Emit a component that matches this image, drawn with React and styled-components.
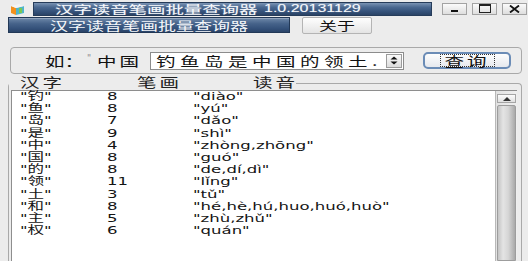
import styled, { createGlobalStyle } from 'styled-components';

const GlobalStyle = createGlobalStyle`
  html, body { margin: 0; padding: 0; background: #ececec; }
  body { font-family: "Noto Sans CJK SC", "DejaVu Sans", sans-serif; }
`;

// text in the shot is drawn wide, so glyphs get stretched horizontally
const Wide = styled.span`
  display: inline-block;
  white-space: nowrap;
  transform: scaleX(${p => p.$sx ?? 1.5});
  transform-origin: ${p => p.$origin ?? 'left'} center;
  letter-spacing: ${p => p.$ls ?? 0}px;
`;

const Window = styled.div`
  width: 528px;
  height: 261px;
  overflow: hidden;
  background: #ececec;
  display: flex;
  flex-direction: column;
`;

// Title bar

const TitleBar = styled.div`
  height: 15px;
  padding-top: 1px;
  display: flex;
  align-items: center;
`;

const AppIcon = styled.svg`
  margin-left: 10px;
  flex: none;
`;

const Caption = styled.div`
  margin-left: 8px;
  width: 399px;
  height: 14px;
  box-sizing: border-box;
  border: 1px solid #263c5a;
  background: linear-gradient(#7a93b3 0%, #4a6890 35%, #35527a 70%, #2a4366 100%);
  color: #f6f8fb;
  font-size: 11.5px;
  line-height: 12px;
  padding-left: 21px;
  overflow: hidden;
  display: flex;
  text-shadow: 0 0 1px rgba(255, 255, 255, 0.4);
`;

const CaptionName = styled.div`
  flex: none;
  width: 209px;
`;

const Version = styled(Wide)`
  font-family: "Liberation Sans", sans-serif;
  font-size: 10px;
`;

const WinButtons = styled.div`
  margin-left: 10px;
  display: flex;
  gap: 5px;
`;

const WinButton = styled.div`
  width: 25px;
  height: 12px;
  box-sizing: border-box;
  border: 1px solid #a3a3a3;
  background: linear-gradient(#fbfbfb, #dedede);
  display: flex;
  align-items: center;
  justify-content: center;
`;

// Banner row

const BannerRow = styled.div`
  margin-top: 1px;
  height: 17px;
  display: flex;
  padding-left: 8px;
`;

const Banner = styled.div`
  width: 282px;
  height: 16px;
  box-sizing: border-box;
  border: 1px solid #223856;
  box-shadow: inset 0 1px 0 rgba(255, 255, 255, 0.25);
  background: linear-gradient(#6f89aa 0%, #46638a 40%, #34517a 75%, #2b4468 100%);
  color: #f6f8fb;
  font-size: 12px;
  display: flex;
  align-items: center;
  justify-content: center;
`;

const PlainButton = styled.div`
  margin-left: 12px;
  width: 70px;
  height: 17px;
  box-sizing: border-box;
  border: 1px solid #b4b4b4;
  border-radius: 2px;
  background: linear-gradient(#fefefe, #e4e4e4);
  color: #111;
  font-size: 12px;
  display: flex;
  align-items: center;
  justify-content: center;
`;

// Query panel

const QueryPanel = styled.div`
  margin: 13px 6px 0 10px;
  height: 27px;
  box-sizing: border-box;
  border: 1px solid #a9a9a9;
  border-radius: 4px;
  display: flex;
  align-items: center;
  font-size: 13px;
  color: #111;
`;

const Lead = styled.div`
  margin-left: 34px;
  width: 40px;
  height: 18px;
  line-height: 18px;
`;

const Sample = styled.div`
  width: 65px;
  height: 18px;
  line-height: 18px;
  display: flex;
`;

const Quote = styled.span`
  width: 12px;
  padding-left: 2px;
  box-sizing: border-box;
  font-family: "DejaVu Sans", sans-serif;
  font-size: 9px;
  line-height: 12px;
  color: #8a8a8a;
`;

const Combo = styled.div`
  width: 254px;
  height: 18px;
  box-sizing: border-box;
  border: 1px solid #8c8c8c;
  background: #fff;
  display: flex;
  align-items: center;
`;

const ComboText = styled.div`
  flex: 1;
  padding-left: 5px;
  overflow: hidden;
  line-height: 16px;
`;

const Spin = styled.div`
  width: 16px;
  height: 14px;
  margin-right: 1px;
  box-sizing: border-box;
  border: 1px solid #9b9b9b;
  background: linear-gradient(#fafafa, #dcdcdc);
  display: flex;
  align-items: center;
  justify-content: center;
`;

const SearchButton = styled.div`
  margin-left: 19px;
  width: 88px;
  height: 17px;
  box-sizing: border-box;
  border: 2px solid #6b8cb6;
  border-radius: 5px;
  background: linear-gradient(#fdfdfd, #e6e9ee);
  display: flex;
  align-items: center;
  justify-content: center;
`;

const FocusRing = styled.div`
  width: 55px;
  height: 13px;
  box-sizing: border-box;
  border: 1px dotted #333;
  display: flex;
  align-items: center;
  justify-content: center;
  line-height: 11px;
`;

// Result group

const Group = styled.div`
  margin: 9px 6px 0 8px;
  flex: 1;
  min-height: 0;
  border: 1px solid #a9a9a9;
  border-bottom: none;
  border-radius: 4px 4px 0 0;
  display: flex;
  flex-direction: column;
`;

const Legend = styled.div`
  margin-top: -8px;
  margin-bottom: 1px;
  width: 287px;
  height: 13px;
  background: #ececec;
  display: grid;
  grid-template-columns: 117px 116px 1fr;
  padding-left: 11px;
  box-sizing: border-box;
  font-size: 13px;
  line-height: 12px;
  color: #222;
`;

const ListFrame = styled.div`
  margin: 0 4px 0 2px;
  flex: 1;
  min-height: 0;
  display: flex;
  border-top: 1px solid #8e8e8e;
  border-left: 1px solid #8e8e8e;
`;

const ListBody = styled.div`
  flex: 1;
  background: #fff;
  padding: 0 0 0 8px;
  font-family: "DejaVu Sans", "Noto Sans CJK SC", sans-serif;
  font-size: 11px;
  color: #141414;
`;

const Row = styled.div`
  display: grid;
  grid-template-columns: 87px 86px 1fr;
  height: 12.2px;
  line-height: 12.2px;
`;

const Scrollbar = styled.div`
  width: 22px;
  border-left: 1px solid #b8b8b8;
  background: linear-gradient(90deg, #e2e2e2, #efefef);
  display: flex;
  flex-direction: column;
  align-items: flex-start;
  padding: 3px 0 0 1px;
  box-sizing: border-box;
`;

const ScrollUp = styled.div`
  width: 19px;
  height: 9px;
  box-sizing: border-box;
  border: 1px solid #a5a5a5;
  background: linear-gradient(#fcfcfc, #e0e0e0);
  display: flex;
  align-items: center;
  justify-content: center;
`;

const Thumb = styled.div`
  margin-top: 2px;
  width: 19px;
  flex: 1;
  box-sizing: border-box;
  border: 1px solid #9d9d9d;
  border-radius: 2px 2px 0 0;
  background: linear-gradient(90deg, #c4c4c4 0%, #e4e4e4 30%, #d6d6d6 60%, #a9a9a9 100%);
`;

const rows = [
  ['钓', 8, 'diào'],
  ['鱼', 8, 'yú'],
  ['岛', 7, 'dǎo'],
  ['是', 9, 'shì'],
  ['中', 4, 'zhòng,zhōng'],
  ['国', 8, 'guó'],
  ['的', 8, 'de,dí,dì'],
  ['领', 11, 'lǐng'],
  ['土', 3, 'tǔ'],
  ['和', 8, 'hé,hè,hú,huo,huó,huò'],
  ['主', 5, 'zhù,zhǔ'],
  ['权', 6, 'quán'],
];

function App() {
  return (
    <Window>
      <GlobalStyle />
      <TitleBar>
        <AppIcon width="15" height="12" viewBox="0 0 15 12">
          <polygon points="1,3 6,5 6,12 1,10" fill="#f2901c" />
          <polygon points="6,5 14,3 14,10 6,12" fill="#4fb5c9" />
          <polygon points="1,3 9,1 14,3 6,5" fill="#f4f4f4" />
          <rect x="9" y="5" width="3" height="5" fill="#7cc84f" />
        </AppIcon>
        <Caption>
          <CaptionName><Wide $sx={1.6}>汉字读音笔画批量查询器</Wide></CaptionName>
          <Version $sx={1.6}>1.0.20131129</Version>
        </Caption>
        <WinButtons>
          <WinButton>
            <svg width="9" height="8" viewBox="0 0 9 8"><rect x="1" y="5" width="7" height="2" fill="#111" /></svg>
          </WinButton>
          <WinButton>
            <svg width="12" height="9" viewBox="0 0 12 9"><rect x="0.5" y="0.5" width="11" height="8" fill="none" stroke="#222" /><rect x="0.5" y="0.5" width="11" height="1.5" fill="#222" /></svg>
          </WinButton>
          <WinButton>
            <svg width="11" height="8" viewBox="0 0 11 8"><path d="M1 0.5 L10 7.5 M10 0.5 L1 7.5" stroke="#111" strokeWidth="1.8" /></svg>
          </WinButton>
        </WinButtons>
      </TitleBar>

      <BannerRow>
        <Banner><Wide $origin="center">汉字读音笔画批量查询器</Wide></Banner>
        <PlainButton><Wide $origin="center">关于</Wide></PlainButton>
      </BannerRow>

      <QueryPanel>
        <Lead><Wide>如：</Wide></Lead>
        <Sample>
          <Quote>"</Quote>
          <Wide $ls={2}>中国</Wide>
        </Sample>
        <Combo>
          <ComboText><Wide $ls={3}>钓鱼岛是中国的领土.</Wide></ComboText>
          <Spin>
            <svg width="8" height="9" viewBox="0 0 8 9">
              <polygon points="4,0.5 7.5,3.5 0.5,3.5" fill="#111" />
              <polygon points="0.5,5.5 7.5,5.5 4,8.5" fill="#111" />
            </svg>
          </Spin>
        </Combo>
        <SearchButton>
          <FocusRing><Wide $origin="center" $ls={2}>查询</Wide></FocusRing>
        </SearchButton>
      </QueryPanel>

      <Group>
        <Legend>
          <span><Wide $ls={2}>汉字</Wide></span>
          <span><Wide $ls={2}>笔画</Wide></span>
          <span><Wide $ls={2}>读音</Wide></span>
        </Legend>
        <ListFrame>
          <ListBody>
            {rows.map(([ch, strokes, reading]) => (
              <Row key={ch}>
                <span><Wide>"{ch}"</Wide></span>
                <span><Wide>{strokes}</Wide></span>
                <span><Wide>"{reading}"</Wide></span>
              </Row>
            ))}
          </ListBody>
          <Scrollbar>
            <ScrollUp>
              <svg width="8" height="4" viewBox="0 0 8 4"><polygon points="4,0 8,4 0,4" fill="#333" /></svg>
            </ScrollUp>
            <Thumb />
          </Scrollbar>
        </ListFrame>
      </Group>
    </Window>
  );
}

export default App;
